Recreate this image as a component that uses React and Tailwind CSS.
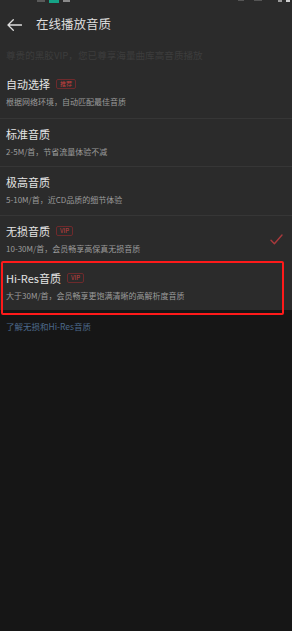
import React from 'react';

const font = { fontFamily: '"Noto Sans CJK SC", "Noto Sans", sans-serif' };

// Small outlined tag next to a quality name
const Tag = ({ children, className = '' }) => (
  <span
    className={`ml-[6px] inline-flex h-[10px] items-center justify-center rounded-[2px] border border-[#6e2a2c] px-[3px] text-[6px] leading-none text-[#c2403f] ${className}`}
  >
    {children}
  </span>
);

const CheckIcon = () => (
  <svg width="13" height="11" viewBox="0 0 13 11" fill="none">
    <path d="M1 6.2l3.4 3.6L12 1" stroke="#a8393c" strokeWidth="1.4" strokeLinecap="round" strokeLinejoin="round" />
  </svg>
);

const Item = ({ title, desc, tag, checked, divider = true }) => (
  <div className={`flex h-[48.5px] flex-col pl-[6px] ${divider ? 'border-t border-[#363636]' : ''}`}>
    <div className="flex items-center pt-[6px] pr-[10px]">
      <div className="flex h-[18px] flex-1 items-center text-[11px] leading-[18px] text-[#e4e4e4]">
        {title}
        {tag}
      </div>
    </div>
    <div className="mt-[2px] flex h-[13px] items-center pr-[8px] text-[8px] leading-[13px] text-[#9c9c9c]">
      <span className="flex-1">{desc}</span>
      {checked && (
        <span className="-mt-[18px] mr-[1px]">
          <CheckIcon />
        </span>
      )}
    </div>
  </div>
);

export default function App() {
  return (
    <div className="flex h-[631px] w-[292px] flex-col overflow-hidden bg-[#161616]" style={font}>
      <div className="flex h-[310px] flex-col bg-[#2b2b2b]">
        {/* status bar remnants */}
        <div className="flex h-[3px] items-start">
          <span className="ml-[37px] h-[2px] w-[8px] bg-[#5a5a5a]" />
          <span className="ml-[4px] h-[3px] w-[10px] bg-[#16a386]" />
          <span className="ml-[4px] h-[2px] w-[7px] bg-[#8a8a8a]" />
          <span className="ml-auto h-[1px] w-[6px] bg-[#555]" />
          <span className="ml-[10px] h-[1px] w-[8px] bg-[#555]" />
          <span className="ml-[16px] h-[2px] w-[4px] bg-[#9a9a9a]" />
          <span className="mr-[2px] ml-[4px] h-[2px] w-[4px] bg-[#cfcfcf]" />
        </div>

        {/* header */}
        <div className="flex h-[43px] items-center">
          <div className="flex w-[36px] items-center pl-[7px]">
            <svg width="15" height="12" viewBox="0 0 15 12" fill="none">
              <path d="M14.5 6H1.2M6.3 0.8L1 6l5.3 5.2" stroke="#dedede" strokeWidth="1.3" strokeLinecap="round" strokeLinejoin="round" />
            </svg>
          </div>
          <span className="text-[12.5px] leading-none text-[#dedede]">在线播放音质</span>
        </div>

        <div className="h-[23px] pt-[2px] pl-[6px] text-[9.6px] leading-[14px] text-[#3d3d3d]">
          尊贵的黑胶VIP，您已尊享海量曲库高音质播放
        </div>

        <Item title="自动选择" desc="根据网络环境，自动匹配最佳音质" tag={<Tag>推荐</Tag>} divider={false} />
        <Item title="标准音质" desc="2-5M/首，节省流量体验不减" />
        <Item title="极高音质" desc="5-10M/首，近CD品质的细节体验" />
        <Item title="无损音质" desc="10-30M/首，会员畅享高保真无损音质" tag={<Tag>VIP</Tag>} checked />

        {/* Hi-Res item with red highlight box */}
        <div className="relative flex flex-1 flex-col pl-[6px]">
          <div className="absolute -top-[2px] left-[1px] h-[54px] w-[283px] rounded-[2px] border-2 border-[#ff1a1a]" />
          <div className="flex h-[18px] items-center pt-[6px] text-[11px] leading-[18px] text-[#e4e4e4]" style={{ boxSizing: 'content-box' }}>
            Hi-Res音质
            <Tag>VIP</Tag>
          </div>
          <div className="mt-[2px] h-[13px] text-[8px] leading-[13px] text-[#9c9c9c]">
            大于30M/首，会员畅享更饱满清晰的高解析度音质
          </div>
        </div>
      </div>

      <div className="mt-[10px] pl-[6px] text-[8.5px] leading-[12px] text-[#4d6a8c]">
        了解无损和Hi-Res音质
      </div>
    </div>
  );
}
